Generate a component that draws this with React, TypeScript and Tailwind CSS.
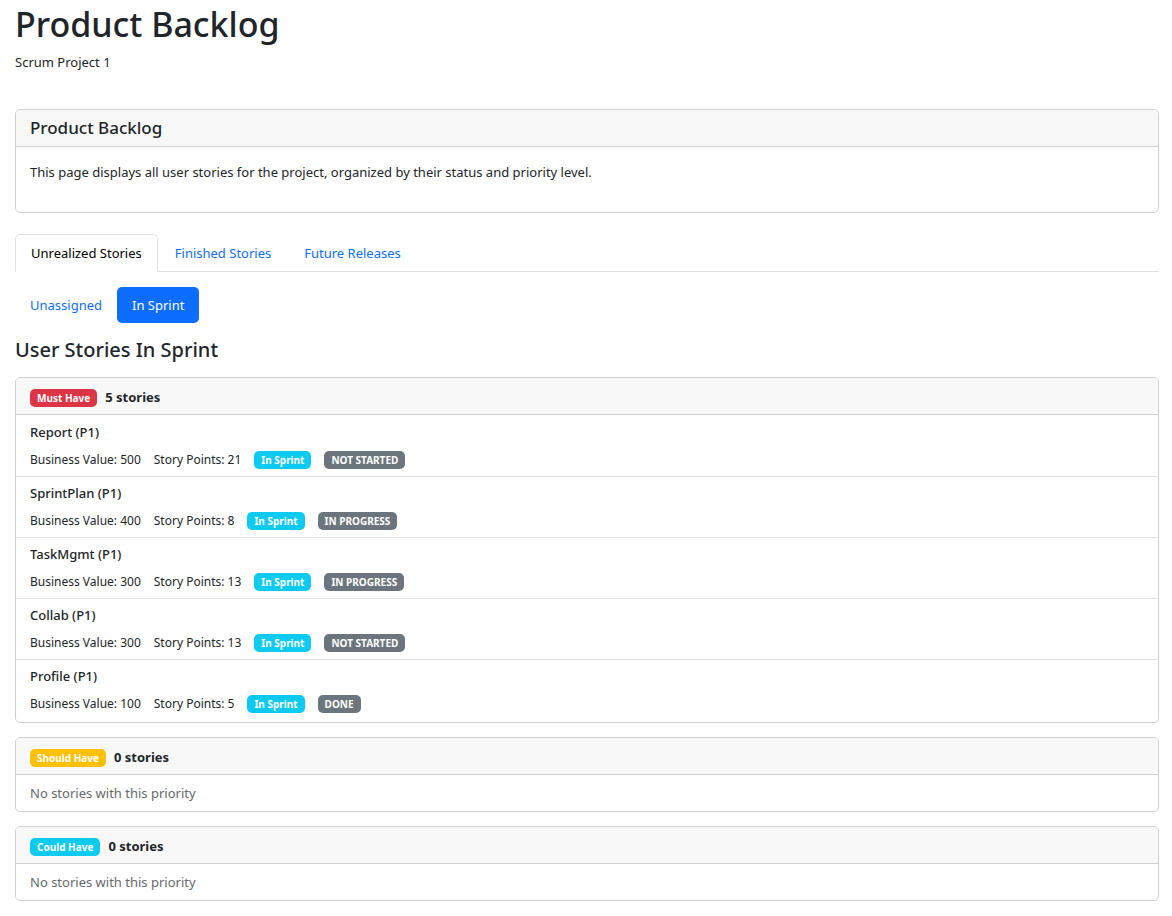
import { useState } from "react";

type Story = { name: string; value: number; points: number; status: string };

const mustHave: Story[] = [
  { name: "Report (P1)", value: 500, points: 21, status: "NOT STARTED" },
  { name: "SprintPlan (P1)", value: 400, points: 8, status: "IN PROGRESS" },
  { name: "TaskMgmt (P1)", value: 300, points: 13, status: "IN PROGRESS" },
  { name: "Collab (P1)", value: 300, points: 13, status: "NOT STARTED" },
  { name: "Profile (P1)", value: 100, points: 5, status: "DONE" },
];

const groups = [
  { label: "Must Have", color: "bg-[#dc3545]", stories: mustHave },
  { label: "Should Have", color: "bg-[#ffc107]", stories: [] as Story[] },
  { label: "Could Have", color: "bg-[#0dcaf0]", stories: [] as Story[] },
];

const tabs = ["Unrealized Stories", "Finished Stories", "Future Releases"];
const pills = ["Unassigned", "In Sprint"];

function Badge({ text, color }: { text: string; color: string }) {
  return (
    <span className={`inline-flex h-[18px] items-center rounded-[5px] px-[7px] text-[10px] leading-none font-bold text-white ${color}`}>
      {text}
    </span>
  );
}

export default function App() {
  const [tab, setTab] = useState(tabs[0]);
  const [pill, setPill] = useState(pills[1]);

  return (
    <main className="bg-white pt-1 pr-[13px] pl-[15px] font-['Noto_Sans',sans-serif] text-[13px] leading-5 text-[#212529]">
      <h1 className="text-[34px] leading-10 font-medium">Product Backlog</h1>
      <p className="mt-2">Scrum Project 1</p>

      <section className="mt-[37px] rounded-[5px] border border-[#d0d0d1]">
        <h2 className="rounded-t-[4px] border-b border-[#d0d0d1] bg-[#f8f8f8] px-[14px] py-2 text-[17px] leading-5 font-medium">
          Product Backlog
        </h2>
        <p className="px-[14px] pt-[15px] pb-[30px]">
          This page displays all user stories for the project, organized by their status and priority level.
        </p>
      </section>

      <nav className="mt-[21px] flex gap-px border-b border-[#dee2e6]">
        {tabs.map((t) => (
          <button
            key={t}
            type="button"
            onClick={() => setTab(t)}
            className={`-mb-px h-[38px] rounded-t-[5px] border px-[15px] ${
              t === tab ? "border-[#dee2e6] border-b-white bg-white text-black" : "border-transparent text-[#0d6efd]"
            }`}
          >
            {t}
          </button>
        ))}
      </nav>

      <div className="mt-[15px] flex">
        {pills.map((p) => (
          <button
            key={p}
            type="button"
            onClick={() => setPill(p)}
            className={`h-9 rounded-[5px] px-[15px] ${p === pill ? "bg-[#0d6efd] text-white" : "text-[#0d6efd]"}`}
          >
            {p}
          </button>
        ))}
      </div>

      <h2 className="mt-[14px] text-[20px] leading-[26px] font-medium">User Stories In Sprint</h2>

      <div className="mt-[14px] flex flex-col gap-[14px]">
        {groups.map((g) => (
          <section key={g.label} className="rounded-[5px] border border-[#d0d0d1]">
            <header className="flex items-end gap-2 rounded-t-[4px] border-b border-[#d0d0d1] bg-[#f8f8f8] px-[14px] pt-[9px] pb-[7px]">
              <Badge text={g.label} color={g.color} />
              <strong className="font-bold">{g.stories.length} stories</strong>
            </header>
            {g.stories.length > 0 ? (
              <ul className="divide-y divide-[#dee2e6] pt-px pb-[2px]">
                {g.stories.map((s) => (
                  <li key={s.name} className="px-[14px] pt-[6px] pb-[7px]">
                    <h3 className="font-medium">{s.name}</h3>
                    <div className="mt-2 flex h-[19px] items-center gap-[13px] text-[12px]">
                      <span>Business Value: {s.value}</span>
                      <span>Story Points: {s.points}</span>
                      <Badge text="In Sprint" color="bg-[#0dcaf0]" />
                      <Badge text={s.status} color="bg-[#6c757d]" />
                    </div>
                  </li>
                ))}
              </ul>
            ) : (
              <p className="px-[14px] py-2 text-[#66696c]">No stories with this priority</p>
            )}
          </section>
        ))}
      </div>
    </main>
  );
}
